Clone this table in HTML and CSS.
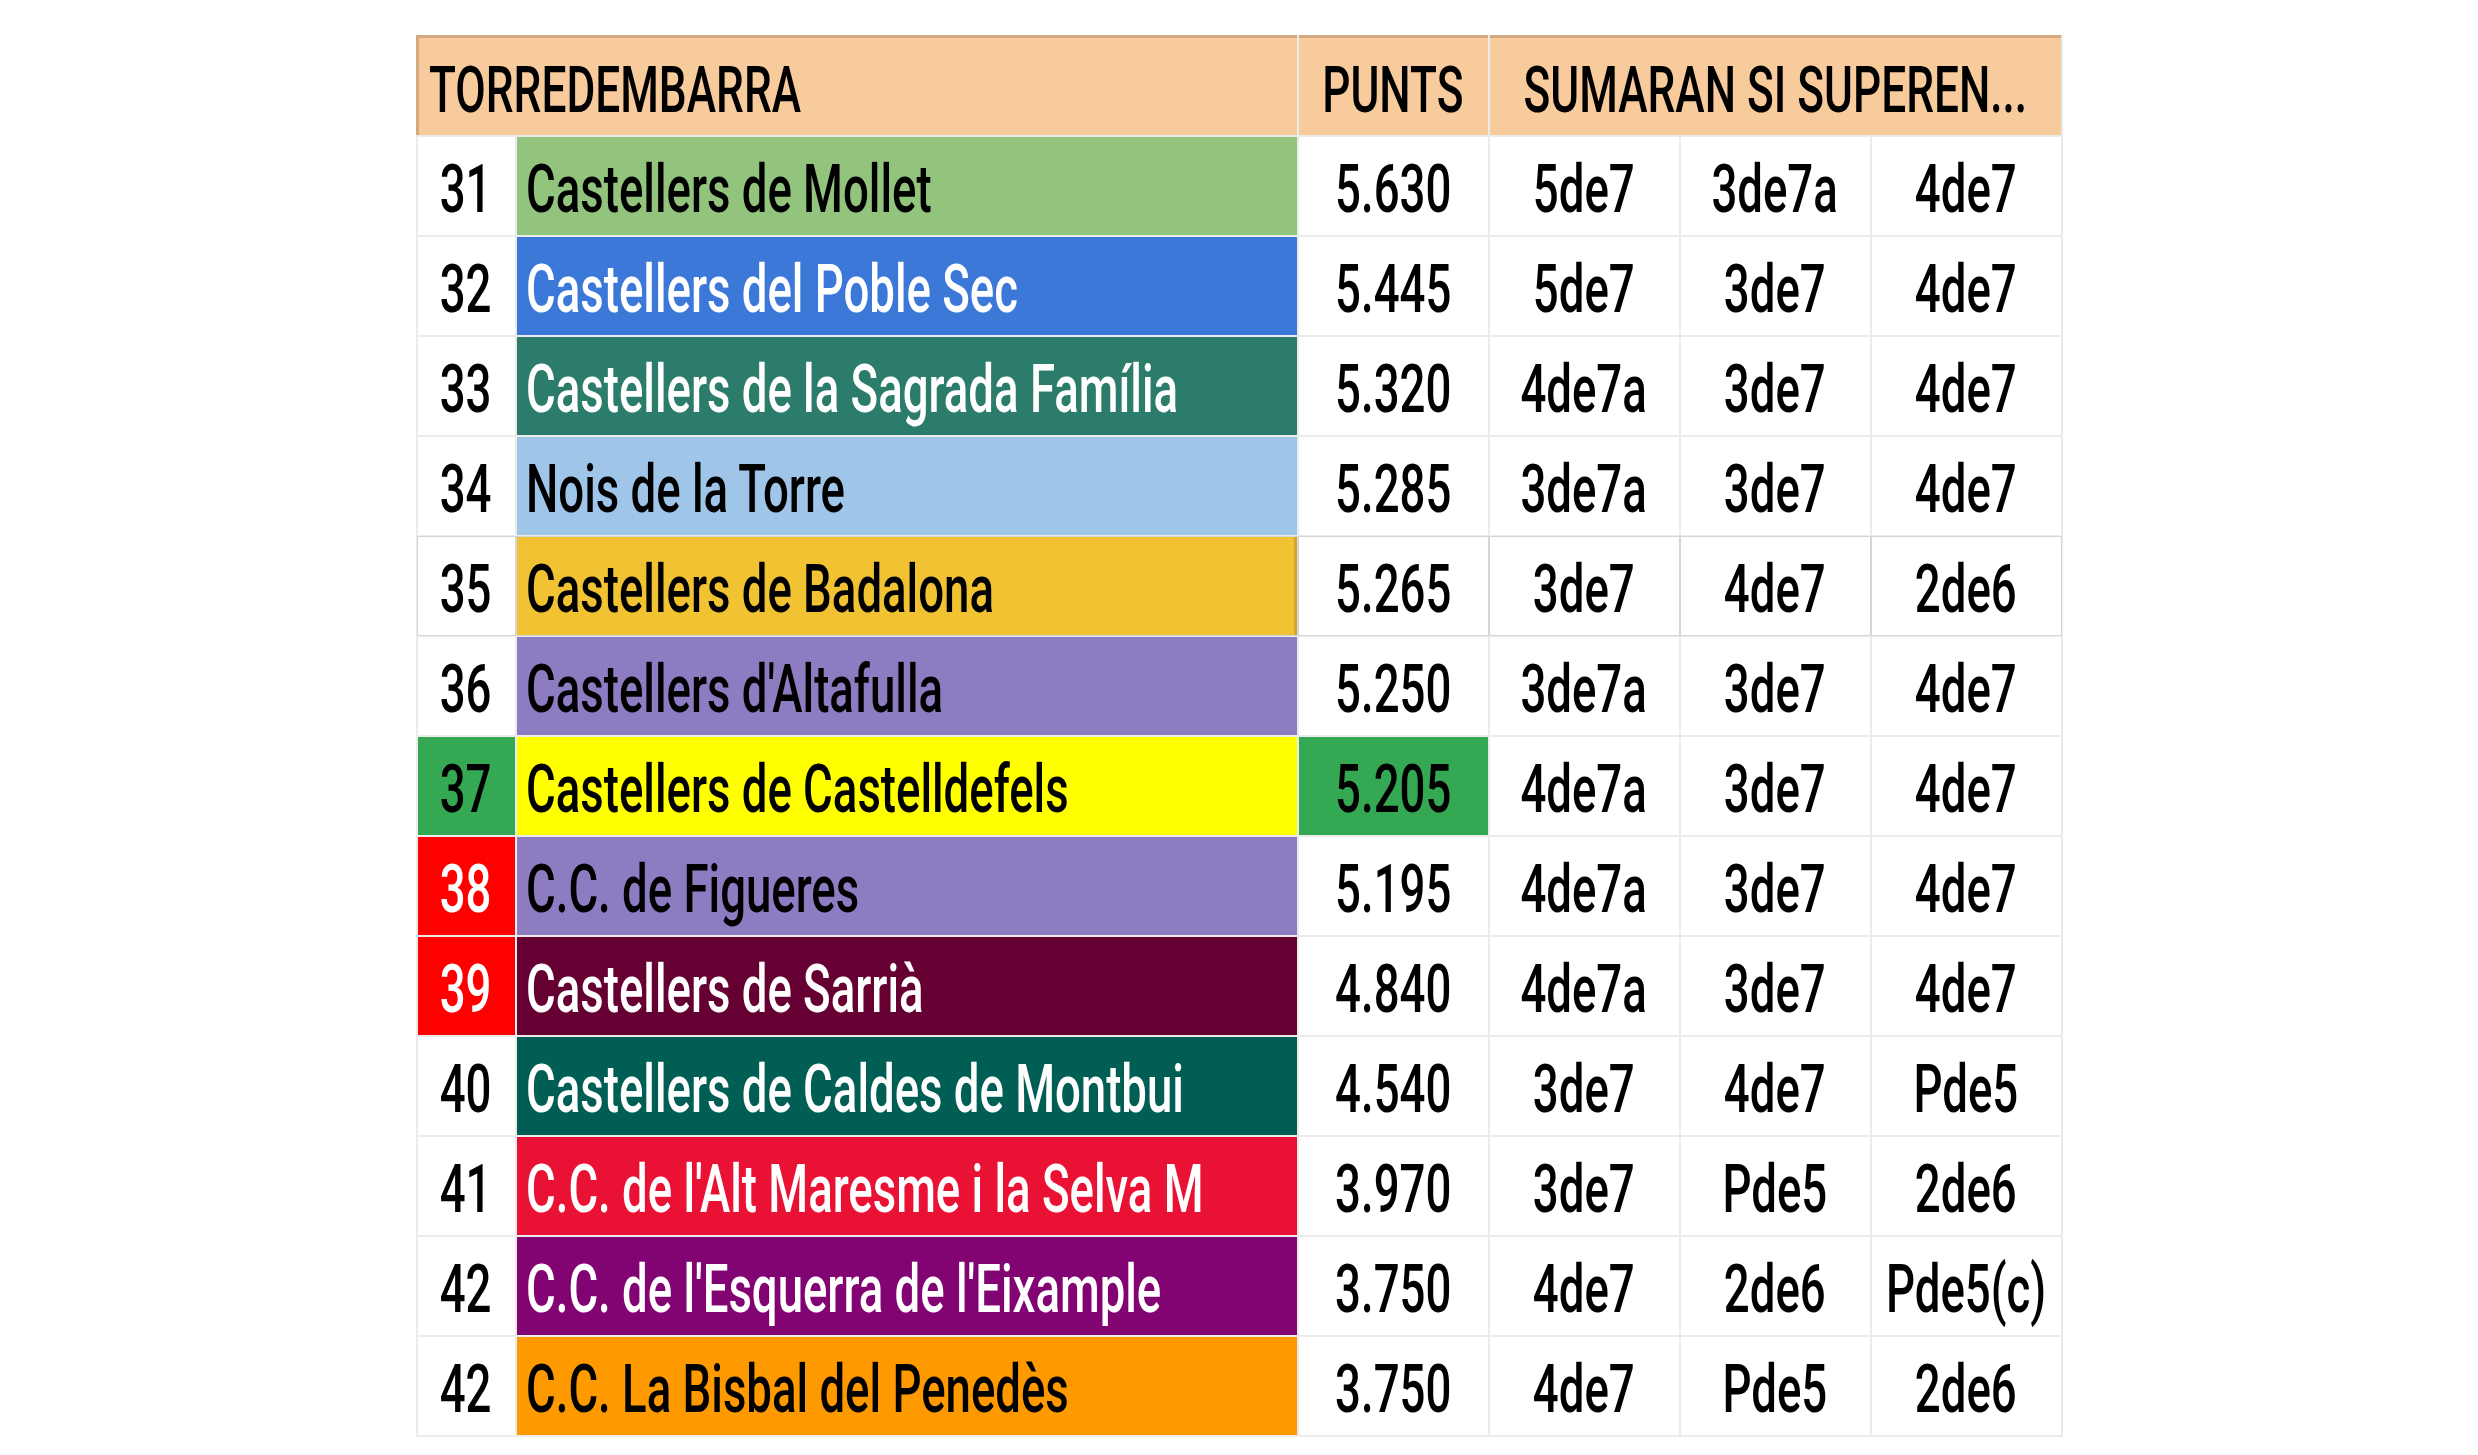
FILE: index.html
```html
<!DOCTYPE html>
<html lang="ca">
<head>
<meta charset="utf-8">
<title>Torredembarra</title>
<link rel="stylesheet" href="styles.css">
</head>
<body>
<div class="sheet">
  <div class="cell head head-title"><span class="t">TORREDEMBARRA</span></div>
  <div class="cell head head-c"><span class="t">PUNTS</span></div>
  <div class="cell head head-c head-wide"><span class="t">SUMARAN SI SUPEREN...</span></div>

  <div class="cell num"><span class="t">31</span></div>
  <div class="cell name bg-lgreen"><span class="t">Castellers de Mollet</span></div>
  <div class="cell c"><span class="t">5.630</span></div>
  <div class="cell c"><span class="t">5de7</span></div>
  <div class="cell c"><span class="t">3de7a</span></div>
  <div class="cell c"><span class="t">4de7</span></div>

  <div class="cell num"><span class="t">32</span></div>
  <div class="cell name bg-blue w"><span class="t">Castellers del Poble Sec</span></div>
  <div class="cell c"><span class="t">5.445</span></div>
  <div class="cell c"><span class="t">5de7</span></div>
  <div class="cell c"><span class="t">3de7</span></div>
  <div class="cell c"><span class="t">4de7</span></div>

  <div class="cell num"><span class="t">33</span></div>
  <div class="cell name bg-teal w"><span class="t">Castellers de la Sagrada Família</span></div>
  <div class="cell c"><span class="t">5.320</span></div>
  <div class="cell c"><span class="t">4de7a</span></div>
  <div class="cell c"><span class="t">3de7</span></div>
  <div class="cell c"><span class="t">4de7</span></div>

  <div class="cell num"><span class="t">34</span></div>
  <div class="cell name bg-lblue"><span class="t">Nois de la Torre</span></div>
  <div class="cell c"><span class="t">5.285</span></div>
  <div class="cell c"><span class="t">3de7a</span></div>
  <div class="cell c"><span class="t">3de7</span></div>
  <div class="cell c"><span class="t">4de7</span></div>

  <div class="cell num dk"><span class="t">35</span></div>
  <div class="cell name bg-gold dk"><span class="t">Castellers de Badalona</span></div>
  <div class="cell c dk"><span class="t">5.265</span></div>
  <div class="cell c dk"><span class="t">3de7</span></div>
  <div class="cell c dk"><span class="t">4de7</span></div>
  <div class="cell c dk"><span class="t">2de6</span></div>

  <div class="cell num"><span class="t">36</span></div>
  <div class="cell name bg-purple"><span class="t">Castellers d'Altafulla</span></div>
  <div class="cell c"><span class="t">5.250</span></div>
  <div class="cell c"><span class="t">3de7a</span></div>
  <div class="cell c"><span class="t">3de7</span></div>
  <div class="cell c"><span class="t">4de7</span></div>

  <div class="cell num bg-green"><span class="t">37</span></div>
  <div class="cell name bg-yellow"><span class="t">Castellers de Castelldefels</span></div>
  <div class="cell c bg-green"><span class="t">5.205</span></div>
  <div class="cell c"><span class="t">4de7a</span></div>
  <div class="cell c"><span class="t">3de7</span></div>
  <div class="cell c"><span class="t">4de7</span></div>

  <div class="cell num bg-red w"><span class="t">38</span></div>
  <div class="cell name bg-purple"><span class="t">C.C. de Figueres</span></div>
  <div class="cell c"><span class="t">5.195</span></div>
  <div class="cell c"><span class="t">4de7a</span></div>
  <div class="cell c"><span class="t">3de7</span></div>
  <div class="cell c"><span class="t">4de7</span></div>

  <div class="cell num bg-red w"><span class="t">39</span></div>
  <div class="cell name bg-maroon w"><span class="t">Castellers de Sarrià</span></div>
  <div class="cell c"><span class="t">4.840</span></div>
  <div class="cell c"><span class="t">4de7a</span></div>
  <div class="cell c"><span class="t">3de7</span></div>
  <div class="cell c"><span class="t">4de7</span></div>

  <div class="cell num"><span class="t">40</span></div>
  <div class="cell name bg-dteal w"><span class="t">Castellers de Caldes de Montbui</span></div>
  <div class="cell c"><span class="t">4.540</span></div>
  <div class="cell c"><span class="t">3de7</span></div>
  <div class="cell c"><span class="t">4de7</span></div>
  <div class="cell c"><span class="t">Pde5</span></div>

  <div class="cell num"><span class="t">41</span></div>
  <div class="cell name bg-crimson w"><span class="t">C.C. de l'Alt Maresme i la Selva M</span></div>
  <div class="cell c"><span class="t">3.970</span></div>
  <div class="cell c"><span class="t">3de7</span></div>
  <div class="cell c"><span class="t">Pde5</span></div>
  <div class="cell c"><span class="t">2de6</span></div>

  <div class="cell num"><span class="t">42</span></div>
  <div class="cell name bg-magenta w"><span class="t">C.C. de l'Esquerra de l'Eixample</span></div>
  <div class="cell c"><span class="t">3.750</span></div>
  <div class="cell c"><span class="t">4de7</span></div>
  <div class="cell c"><span class="t">2de6</span></div>
  <div class="cell c"><span class="t">Pde5(c)</span></div>

  <div class="cell num"><span class="t">42</span></div>
  <div class="cell name bg-orange"><span class="t">C.C. La Bisbal del Penedès</span></div>
  <div class="cell c"><span class="t">3.750</span></div>
  <div class="cell c"><span class="t">4de7</span></div>
  <div class="cell c"><span class="t">Pde5</span></div>
  <div class="cell c"><span class="t">2de6</span></div>
</div>
</body>
</html>
```

FILE: styles.css
```css
html, body {
  margin: 0;
  padding: 0;
  background: #ffffff;
}

body {
  font-family: Roboto, "Liberation Sans", sans-serif;
  font-weight: 500;
  color: #000000;
}

.sheet {
  width: max-content;
  margin: 35px auto 0;
  display: grid;
  grid-template-columns: 97px 780px repeat(4, 189px);
  grid-template-rows: 100px repeat(13, 98px);
  gap: 2px;
  padding: 0 2px 2px;
  background: #ebebeb;
}

.cell {
  display: flex;
  align-items: center;
  overflow: visible;
  white-space: nowrap;
  background: #ffffff;
  font-size: 66px;
  line-height: 1;
  padding-top: 7px;
  box-sizing: border-box;
}

.t {
  display: inline-block;
  flex-shrink: 0;
  transform: scaleX(0.69);
  transform-origin: center center;
}

.head {
  background: #f8cb9c;
  border-top: 3px solid #d6a87f;
  font-size: 65px;
  padding-top: 8px;
}

.head .t {
  transform: scaleX(0.68);
}

.head-title {
  grid-column: span 2;
  margin-left: -2px;
  border-left: 3px solid #d6a87f;
  padding-left: 10px;
}

.head-title .t,
.name .t {
  transform-origin: left center;
}

.head-c {
  justify-content: center;
}

.head-wide {
  grid-column: span 3;
}

.num,
.c {
  justify-content: center;
}

.name {
  padding-left: 9px;
}

.w {
  color: #ffffff;
}

.dk {
  box-shadow: 0 0 0 1px #d6d6d6;
}

.bg-lgreen { background: #93c47d; }
.bg-blue { background: #3c78d8; }
.bg-teal { background: #2b7c6a; }
.bg-lblue { background: #9fc5e8; }
.bg-gold { background: #f1c232; box-shadow: inset -3px 0 0 #cfa630, 0 0 0 1px #d6d6d6; }
.bg-purple { background: #8e7cc3; }
.bg-yellow { background: #ffff00; }
.bg-green { background: #34a853; }
.bg-red { background: #ff0000; }
.bg-maroon { background: #660033; }
.bg-dteal { background: #005e55; }
.bg-crimson { background: #e91235; }
.bg-magenta { background: #820473; }
.bg-orange { background: #ff9900; }
```
